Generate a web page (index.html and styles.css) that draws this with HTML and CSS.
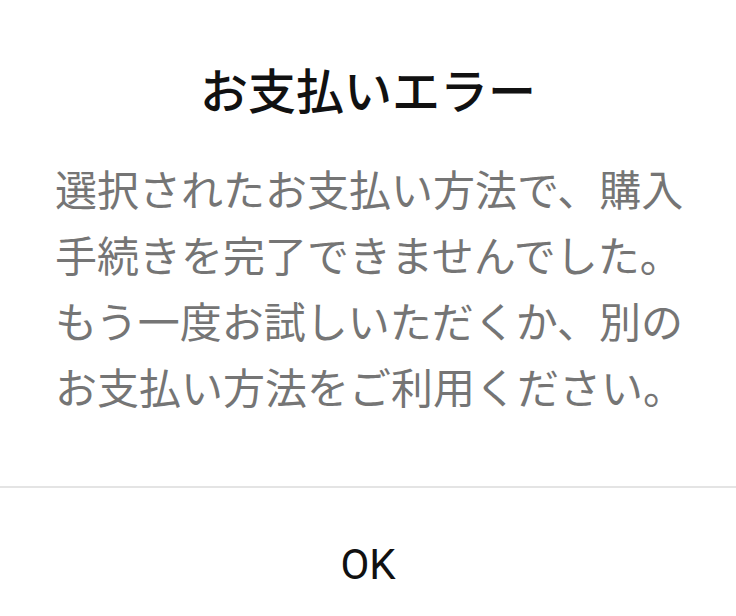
FILE: index.html
```html
<!DOCTYPE html>
<html lang="ja">
<head>
    <meta charset="UTF-8">
    <meta name="viewport" content="width=device-width, initial-scale=1.0">
    <title>お支払いエラー</title>
    <link rel="stylesheet" href="styles.css">
</head>
<body>
    <div class="dialog">
        <h1 class="dialog-title">お支払いエラー</h1>
        <p class="dialog-message">選択されたお支払い方法で、購入手続きを完了できませんでした。もう一度お試しいただくか、別のお支払い方法をご利用ください。</p>
        <div class="dialog-actions">
            <button class="dialog-button">OK</button>
        </div>
    </div>
</body>
</html>
```
FILE: styles.css
```css
body {
    margin: 0;
    background-color: #fff;
    font-family: "Noto Sans CJK JP", "Noto Sans", sans-serif;
}
.dialog {
    width: 736px;
    padding-top: 55px;
}
.dialog-title {
    margin: 0;
    font-size: 48px;
    line-height: 66px;
    font-weight: 500;
    color: #111;
    text-align: center;
}
.dialog-message {
    margin: 34px 0 0;
    padding: 0 50px 0 55px;
    font-size: 42px;
    line-height: 66px;
    color: #757575;
}
.dialog-actions {
    margin-top: 67px;
    border-top: 2px solid #e4e4e4;
    display: flex;
    justify-content: center;
}
.dialog-button {
    background: none;
    border: none;
    padding: 0;
    height: 152px;
    width: 100%;
    font-family: Roboto, "Noto Sans", sans-serif;
    font-size: 42px;
    font-weight: 400;
    color: #111;
    cursor: pointer;
}
```
